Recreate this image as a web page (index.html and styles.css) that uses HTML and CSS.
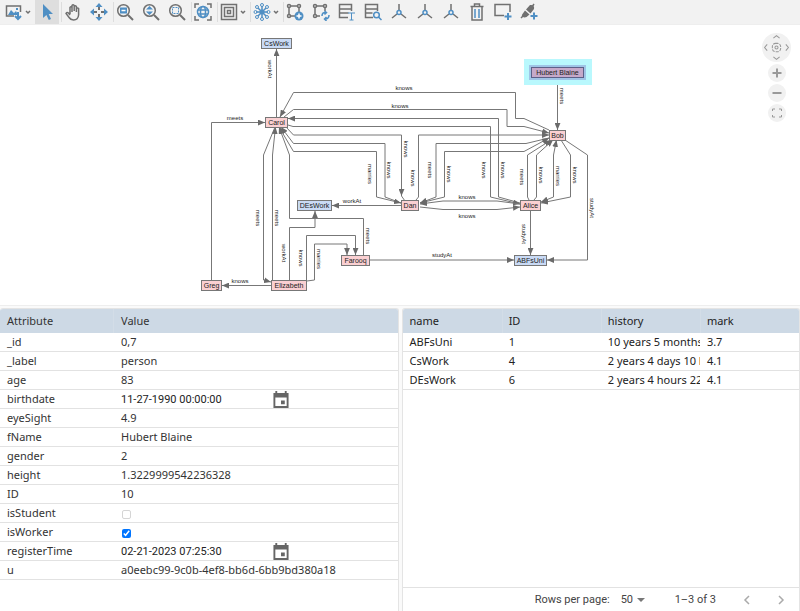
FILE: index.html
```
<!DOCTYPE html>
<html lang="en">
<head>
    <meta charset="UTF-8">
    <meta name="viewport" content="width=device-width, initial-scale=1.0">
    <title>Graph Explorer</title>
    <link rel="stylesheet" href="styles.css">
</head>
<body>

<div class="toolbar" role="toolbar" aria-label="Graph tools">
    <button class="tool wide" aria-label="Export image">
        <svg class="icon" viewBox="0 0 18 18"><path d="M9 13H1.500V3h14v6"/><path class="fill-blue" d="M3 12l3-5 3 3 2-2 2 4zM11 5h2v2h-2z"/><path class="blue thick" d="M13 9v7M10 13l3 3 3-3"/></svg>
        <svg class="chevron" viewBox="0 0 6 6"><path d="M1 2l2 2 2-2"/></svg>
    </button>
    <span class="divider"></span>
    <button class="tool active" aria-label="Select">
        <svg class="icon" viewBox="0 0 18 18"><path class="fill-blue" d="M5 1v14l3.400-3 2.400 5 2.200-1-2.300-5H15z"/></svg>
    </button>
    <span class="divider"></span>
    <button class="tool" aria-label="Pan">
        <svg class="icon" viewBox="0 0 18 18"><path d="M6 11V4.500q1-1.500 2 0V9M8 8V2.500q1-1.500 2.200 0V8M10.200 8V3.500q1-1.300 2.200 0V9M12.400 9V5.500q1.200-1.200 2.200 0V12q-.5 5-5 5-3 0-4.500-2.500L2 10.500q.8-1.800 2.500-.5L6 12"/></svg>
    </button>
    <button class="tool" aria-label="Move">
        <svg class="icon" viewBox="0 0 18 18"><path class="fill-blue" d="M9 0l3.500 4h-7zM9 18l3.500-4h-7zM0 9l4-3.500v7zM18 9l-4-3.500v7z"/><path class="thick" d="M9 4v3M9 11v3M4 9h3M11 9h3"/></svg>
    </button>
    <span class="divider"></span>
    <button class="tool" aria-label="Zoom to area">
        <svg class="icon" viewBox="0 0 18 18"><circle cx="7.500" cy="7.500" r="5.800"/><path class="thick" d="M12 12l5 5"/><path class="fill-blue" d="M4 4.500h7v6H4z"/><path class="light" d="M5.500 7.500h4"/></svg>
    </button>
    <button class="tool" aria-label="Zoom in and out">
        <svg class="icon" viewBox="0 0 18 18"><circle cx="7.500" cy="7.500" r="5.800"/><path class="thick" d="M12 12l5 5"/><path class="fill-blue" d="M7.500 3L11 6.500H4zM7.500 12L4 8.500h7z"/></svg>
    </button>
    <button class="tool" aria-label="Zoom to selection">
        <svg class="icon" viewBox="0 0 18 18"><circle cx="7.500" cy="7.500" r="5.800"/><path class="thick" d="M12 12l5 5"/><path class="blue dash" d="M4.500 4.500h6v6h-6z"/></svg>
    </button>
    <span class="divider"></span>
    <button class="tool" aria-label="Fit graph">
        <svg class="icon" viewBox="0 0 18 18"><path d="M1 5V1h4M13 1h4v4M17 13v4h-4M5 17H1v-4"/><circle class="blue" cx="9" cy="9" r="5.500"/><ellipse class="blue" cx="9" cy="9" rx="2.500" ry="5.500"/><path class="blue" d="M4 7h10M4 11h10"/></svg>
    </button>
    <span class="divider"></span>
    <button class="tool wide" aria-label="Layers">
        <svg class="icon" viewBox="0 0 18 18"><path d="M1.500 1.500h15v15h-15zM4.500 4.500h9v9h-9zM7.500 7.500h3v3h-3z"/></svg>
        <svg class="chevron" viewBox="0 0 6 6"><path d="M1 2l2 2 2-2"/></svg>
    </button>
    <span class="divider"></span>
    <button class="tool wide" aria-label="Layout">
        <svg class="icon" viewBox="0 0 18 18"><path class="blue" d="M9 3v12M3 9h12M5 5l8 8M13 5l-8 8"/><g class="dots"><circle cx="9" cy="2" r="1.500"/><circle cx="9" cy="16" r="1.500"/><circle cx="2.500" cy="9" r="1.500"/><circle cx="15.500" cy="9" r="1.500"/><circle cx="4" cy="4" r="1.500"/><circle cx="14" cy="14" r="1.500"/><circle cx="14" cy="4" r="1.500"/><circle cx="4" cy="14" r="1.500"/></g><circle class="fill-blue" cx="9" cy="9" r="2.500"/></svg>
        <svg class="chevron" viewBox="0 0 6 6"><path d="M1 2l2 2 2-2"/></svg>
    </button>
    <span class="divider"></span>
    <button class="tool" aria-label="Add to graph">
        <svg class="icon" viewBox="0 0 18 18"><path d="M4 3h8M3 4v8M13 4v5M4 13h5"/><circle cx="3" cy="3" r="1.500"/><circle cx="13" cy="3" r="1.500"/><circle cx="3" cy="13" r="1.500"/><circle class="fill-blue" cx="13" cy="13" r="4.500"/><path class="light" d="M13 10.500v5M10.500 13h5"/></svg>
    </button>
    <button class="tool" aria-label="Reload graph">
        <svg class="icon" viewBox="0 0 18 18"><path d="M4 3h8M3 4v8M13 4v4M4 13h4"/><circle cx="3" cy="3" r="1.500"/><circle cx="13" cy="3" r="1.500"/><circle cx="3" cy="13" r="1.500"/><path class="blue" d="M10 13q0-4 4-3.500M12.500 8l2 1.500-2 2M17 12q0 4-4 4M14.500 14L12.500 16l2 2"/></svg>
    </button>
    <button class="tool" aria-label="Edit labels">
        <svg class="icon" viewBox="0 0 18 18"><path d="M10 14.500H1.500v-13h12V8M1.500 6h12M1.500 10h9"/><path class="blue thin" d="M10 10h7M13.500 10v7M11.500 17h4"/></svg>
    </button>
    <button class="tool" aria-label="Search data">
        <svg class="icon" viewBox="0 0 18 18"><path d="M9 14.500H1.500v-13h12V8M1.500 6h12M1.500 10h7"/><circle class="blue" cx="12.500" cy="12" r="2.800"/><path class="blue" d="M14.500 14l3 3"/></svg>
    </button>
    <button class="tool" aria-label="Expand incoming">
        <svg class="icon" viewBox="0 0 18 18"><path d="M9 1v7M7 11l-5 4M11 11l5 4"/><circle class="blue" cx="9" cy="9.500" r="2"/></svg>
    </button>
    <button class="tool" aria-label="Expand outgoing">
        <svg class="icon" viewBox="0 0 18 18"><path d="M9 1v7M7 11l-5 4M11 11l5 4"/><circle class="blue" cx="9" cy="9.500" r="2"/></svg>
    </button>
    <button class="tool" aria-label="Expand all">
        <svg class="icon" viewBox="0 0 18 18"><path d="M9 1v7M7 11l-5 4M11 11l5 4"/><circle class="blue" cx="9" cy="9.500" r="2"/></svg>
    </button>
    <button class="tool" aria-label="Delete">
        <svg class="icon" viewBox="0 0 18 18"><path d="M2.500 3.500h13M6.500 3V1h5v2M4 4v13h10V4"/><path class="blue" d="M7 6v9M11 6v9"/></svg>
    </button>
    <button class="tool" aria-label="Add node">
        <svg class="icon" viewBox="0 0 18 18"><path d="M10 12.500H1v-11h15V9"/><path class="blue thick" d="M14 10v7M10.500 13.500h7"/></svg>
    </button>
    <button class="tool" aria-label="Add edge">
        <svg class="icon" viewBox="0 0 18 18"><path d="M1 15l3-3M12 4l2-3"/><path class="fill-gray" d="M2.500 11l2.500-3.500 4.500 4-3 2.500q-2.500 1-4-.5t0-2.500zM6 6.500L10 2q2.500-.5 3.500 1t.5 3l-3.500 4.500z"/><path class="blue thick" d="M14 9.500v7M10.500 13h7"/></svg>
    </button>
</div>

<main class="graph">
    <svg class="canvas" viewBox="0 25 800 280" role="img" aria-label="Graph of people, work places and universities">
        <defs>
            <marker id="arrow" viewBox="0 0 6 5" refX="6" refY="2.500" markerWidth="7" markerHeight="6" markerUnits="userSpaceOnUse" orient="auto">
                <path d="M0 0l6 2.500L0 5z" fill="#6a6a6a"/>
            </marker>
        </defs>

        <g class="edges">
            <path d="M276.500 117V49"/>
            <path d="M211.500 280V122.500H265"/>
            <path d="M549 130L524 118.500H515.500V92.500H293.500L280 117"/>
            <path d="M284 117L293.500 109.500H507V126.500H524L549 133"/>
            <path d="M520 203L498.500 197V118.500H288"/>
            <path d="M288 125L293 126.500H490.500V197L520 204"/>
            <path d="M286 127L293.500 135H401.500V196"/>
            <path class="plain" d="M401.500 196L405 201"/>
            <path d="M401 203L385 197V143.500H293.500L281 127"/>
            <path d="M293.500 151.500H376.500V197L401 203"/>
            <path d="M293.500 151.500L279 127"/>
            <path d="M416 200L418.500 197V135H549"/>
            <path d="M549 138L526 143.500H436V197L420 203"/>
            <path d="M524 151.500H444.500V197L420 203"/>
            <path d="M524 151.500L549 138"/>
            <path d="M529 200L527.500 197V155L551 140"/>
            <path d="M534 200L536.500 197V155L553 140"/>
            <path d="M553.500 155V197L541 202"/>
            <path d="M553.500 155L556.500 140"/>
            <path d="M561 140L570.500 155V197L541 203"/>
            <path d="M565 140L587.500 155V260H547"/>
            <path d="M557.500 78V130"/>
            <path d="M530.500 211V255"/>
            <path d="M370 260H514"/>
            <path d="M401 205.500H332"/>
            <path d="M520 204L497 201H443L420 204"/>
            <path d="M420 207L443 209.500H497L520 207"/>
            <path d="M275 127L263.500 155V280L271 282"/>
            <path d="M272.500 280V155L275.500 127"/>
            <path d="M363.500 255V218.500H289.500V155L279 127"/>
            <path d="M289.500 280V227.500H315V211"/>
            <path d="M306.500 280V235.500H355.500V255"/>
            <path d="M307 281L314.500 280V244H347V255"/>
            <path d="M271 285.500H222"/>
        </g>

        <g class="edge-labels">
            <text x="235" y="120">meets</text>
            <text x="404" y="90">knows</text>
            <text x="400" y="108">knows</text>
            <text x="352" y="203">workAt</text>
            <text x="467" y="199">knows</text>
            <text x="467" y="218">knows</text>
            <text x="442" y="257">studyAt</text>
            <text x="240" y="283">knows</text>
            <text transform="translate(268 69) rotate(90)">workAt</text>
            <text transform="translate(560 96) rotate(90)">meets</text>
            <text transform="translate(368 174) rotate(90)">marries</text>
            <text transform="translate(387 170) rotate(90)">knows</text>
            <text transform="translate(404 149) rotate(90)">knows</text>
            <text transform="translate(411 178) rotate(90)">knows</text>
            <text transform="translate(428 170) rotate(90)">meets</text>
            <text transform="translate(447 174) rotate(90)">knows</text>
            <text transform="translate(482 170) rotate(90)">knows</text>
            <text transform="translate(501 170) rotate(90)">knows</text>
            <text transform="translate(520 177) rotate(90)">meets</text>
            <text transform="translate(539 175) rotate(90)">knows</text>
            <text transform="translate(556 176) rotate(90)">marries</text>
            <text transform="translate(573 175) rotate(90)">knows</text>
            <text transform="translate(590 208) rotate(90)">studyAt</text>
            <text transform="translate(522 234) rotate(90)">studyAt</text>
            <text transform="translate(256 218) rotate(90)">meets</text>
            <text transform="translate(275 218) rotate(90)">meets</text>
            <text transform="translate(282 253) rotate(90)">workAt</text>
            <text transform="translate(299 258) rotate(90)">knows</text>
            <text transform="translate(317 259) rotate(90)">marries</text>
            <text transform="translate(366 236) rotate(90)">meets</text>
        </g>

        <g class="nodes">
            <rect class="place" x="261.500" y="38.500" width="30" height="10"/><text x="276.500" y="46">CsWork</text>
            <rect class="place" x="297.500" y="200.500" width="34" height="10"/><text x="314.500" y="208">DEsWork</text>
            <rect class="place" x="514.500" y="255.500" width="32" height="10"/><text x="530.500" y="263">ABFsUni</text>
            <rect class="person" x="265.500" y="117.500" width="22" height="10"/><text x="276.500" y="125">Carol</text>
            <rect class="person" x="549.500" y="130.500" width="16" height="10"/><text x="557.500" y="138">Bob</text>
            <rect class="person" x="401.500" y="200.500" width="17" height="10"/><text x="410" y="208">Dan</text>
            <rect class="person" x="520.500" y="200.500" width="20" height="10"/><text x="530.500" y="208">Alice</text>
            <rect class="person" x="341.500" y="255.500" width="28" height="10"/><text x="355.500" y="263">Farooq</text>
            <rect class="person" x="271.500" y="280.500" width="35" height="10"/><text x="289" y="288">Elizabeth</text>
            <rect class="person" x="201.500" y="280.500" width="20" height="10"/><text x="211.500" y="288">Greg</text>
            <rect class="halo" x="524" y="59" width="68" height="26"/>
            <rect class="halo-inner" x="529" y="65" width="57" height="15"/>
            <rect class="selected" x="531.500" y="67.500" width="52" height="10"/><text x="557.500" y="75">Hubert Blaine</text>
        </g>
    </svg>

    <div class="nav">
        <button class="nav-button wheel" aria-label="Pan view">
            <svg viewBox="0 0 28 28"><path d="M11 5l3-2.500L17 5M11 23l3 2.500 3-2.500M5 11l-2.500 3L5 17M23 11l2.500 3-2.500 3"/><rect x="10" y="10" width="8" height="8" rx="3" stroke-dasharray="3 1"/><circle cx="14" cy="14" r="1.500"/></svg>
        </button>
        <button class="nav-button" aria-label="Zoom in"><svg viewBox="0 0 18 18"><path class="bold" d="M9 4.500v9M4.500 9h9"/></svg></button>
        <button class="nav-button" aria-label="Zoom out"><svg viewBox="0 0 18 18"><path class="bold" d="M4.500 9h9"/></svg></button>
        <button class="nav-button" aria-label="Fit to window"><svg viewBox="0 0 18 18"><path d="M4.500 7V5H7M11 5h2.500v2M13.500 11v2H11M7 13H4.500v-2"/></svg></button>
    </div>
</main>

<div class="panels">
    <section class="panel">
        <table class="grid attributes">
            <colgroup><col class="col-attribute"><col></colgroup>
            <thead>
                <tr><th>Attribute</th><th>Value</th></tr>
            </thead>
            <tbody>
                <tr><td>_id</td><td>0,7</td></tr>
                <tr><td>_label</td><td>person</td></tr>
                <tr><td>age</td><td>83</td></tr>
                <tr>
                    <td><label for="birthdate">birthdate</label></td>
                    <td>
                        <div class="date-field">
                            <input type="text" id="birthdate" value="11-27-1990 00:00:00">
                            <button aria-label="Pick birthdate"><svg viewBox="0 0 18 18"><path d="M3 0h2v2h8V0h2v2h2v16H1V2h2zM3 7v9h12V7zM9 10h4v4H9z" fill-rule="evenodd"/></svg></button>
                        </div>
                    </td>
                </tr>
                <tr><td>eyeSight</td><td>4.9</td></tr>
                <tr><td>fName</td><td>Hubert Blaine</td></tr>
                <tr><td>gender</td><td>2</td></tr>
                <tr><td>height</td><td>1.3229999542236328</td></tr>
                <tr><td>ID</td><td>10</td></tr>
                <tr><td><label for="isStudent">isStudent</label></td><td><input type="checkbox" id="isStudent"></td></tr>
                <tr><td><label for="isWorker">isWorker</label></td><td><input type="checkbox" id="isWorker" checked></td></tr>
                <tr>
                    <td><label for="registerTime">registerTime</label></td>
                    <td>
                        <div class="date-field">
                            <input type="text" id="registerTime" value="02-21-2023 07:25:30">
                            <button aria-label="Pick register time"><svg viewBox="0 0 18 18"><path d="M3 0h2v2h8V0h2v2h2v16H1V2h2zM3 7v9h12V7zM9 10h4v4H9z" fill-rule="evenodd"/></svg></button>
                        </div>
                    </td>
                </tr>
                <tr><td>u</td><td>a0eebc99-9c0b-4ef8-bb6d-6bb9bd380a18</td></tr>
            </tbody>
        </table>
    </section>

    <section class="panel">
        <table class="grid records">
            <thead>
                <tr><th>name</th><th>ID</th><th>history</th><th>mark</th></tr>
            </thead>
            <tbody>
                <tr><td>ABFsUni</td><td>1</td><td>10 years 5 months</td><td>3.7</td></tr>
                <tr><td>CsWork</td><td>4</td><td>2 years 4 days 10 h</td><td>4.1</td></tr>
                <tr><td>DEsWork</td><td>6</td><td>2 years 4 hours 22</td><td>4.1</td></tr>
            </tbody>
        </table>
        <div class="pager">
            <label for="pageSize">Rows per page:</label>
            <span class="page-size">
                <select id="pageSize"><option>50</option><option>100</option></select>
            </span>
            <span class="range">1–3 of 3</span>
            <button aria-label="Previous page"><svg viewBox="0 0 10 10"><path d="M7 1L3 5l4 4"/></svg></button>
            <button aria-label="Next page"><svg viewBox="0 0 10 10"><path d="M3 1l4 4-4 4"/></svg></button>
        </div>
    </section>
</div>

</body>
</html>
```
FILE: styles.css
```
* {
    box-sizing: border-box;
}
body {
    margin: 0;
    min-height: 100vh;
    display: flex;
    flex-direction: column;
    background-color: #fff;
    color: #333;
    font-family: "Noto Sans", sans-serif;
    font-size: 11px;
}
button {
    padding: 0;
    border: none;
    background: none;
    cursor: pointer;
}
svg {
    display: block;
}

/* Toolbar */
.toolbar {
    display: flex;
    align-items: center;
    height: 25px;
    padding-left: 2px;
    background-color: #f2f2f2;
    border-bottom: 1px solid #eee;
}
.tool {
    display: flex;
    align-items: center;
    justify-content: center;
    width: 24px;
    height: 24px;
    margin-right: 2px;
}
.tool.wide {
    width: 31px;
}
.tool.active {
    background-color: #dedede;
}
.divider {
    width: 1px;
    height: 20px;
    margin-right: -1px;
    background-color: #ddd;
}
.icon {
    width: 18px;
    height: 18px;
}
.icon, .chevron {
    fill: none;
    stroke: #707070;
    stroke-width: 1.5;
}
.chevron {
    width: 6px;
    height: 6px;
    margin-left: 2px;
}
.icon .blue, .icon .dots {
    stroke: #4f8fc4;
}
.icon .dots {
    stroke-width: 1;
}
.icon .fill-blue {
    fill: #4f8fc4;
    stroke: none;
}
.icon .fill-gray {
    fill: #707070;
    stroke: none;
}
.icon .light {
    stroke: #fff;
}
.icon .thick {
    stroke-width: 2;
}
.icon .thin {
    stroke-width: 1;
}
.icon .dash {
    stroke-width: 1;
    stroke-dasharray: 2 1;
}

/* Graph */
.graph {
    position: relative;
}
.canvas {
    width: 100%;
    height: auto;
    font-family: "Liberation Sans", Arial, sans-serif;
    text-anchor: middle;
}
.edges path {
    fill: none;
    stroke: #777;
    marker-end: url(#arrow);
}
.edges .plain {
    marker-end: none;
}
.edge-labels {
    font-size: 6px;
    fill: #222;
}
.nodes {
    font-size: 7px;
    fill: #222;
}
.nodes rect {
    stroke: #777;
}
.nodes .place {
    fill: #c9daf5;
}
.nodes .person {
    fill: #fad0d2;
}
.nodes .halo {
    fill: #b9f8fd;
    stroke: none;
}
.nodes .halo-inner {
    fill: #9fc4e6;
    stroke: none;
}
.nodes .selected {
    fill: #c5a9c9;
    stroke: #5d6088;
}
.nav {
    position: absolute;
    top: 8px;
    right: 9px;
    display: flex;
    flex-direction: column;
    align-items: center;
    gap: 2px;
}
.nav-button {
    width: 18px;
    height: 18px;
    border-radius: 50%;
    background-color: #f1f1f1;
}
.nav-button.wheel {
    width: 29px;
    height: 29px;
}
.nav-button svg {
    width: 100%;
    height: 100%;
    fill: none;
    stroke: #999;
}
.nav-button .bold {
    stroke-width: 2;
}

/* Tables */
.panels {
    flex: 1;
    display: grid;
    grid-template-columns: 1fr 1fr;
    gap: 3px;
    padding-top: 2px;
    border-top: 1px solid #eee;
    background-color: #fafafa;
}
.panel {
    display: flex;
    flex-direction: column;
    min-width: 0;
    border: 1px solid #e4e4e4;
    border-left: none;
    border-bottom: none;
    border-radius: 3px 3px 0 0;
    background-color: #fff;
    overflow: hidden;
}
.panel + .panel {
    border-left: 1px solid #e4e4e4;
}
.grid {
    width: 100%;
    table-layout: fixed;
    border-collapse: separate;
    border-spacing: 0;
}
.grid th {
    height: 24px;
    padding: 0 0 2px 7px;
    background-color: #cdd9e5;
    font-weight: 400;
    text-align: left;
}
.grid th + th {
    border-left: 1px solid #d3dde7;
}
.grid td {
    height: 19px;
    padding: 0 0 0 7px;
    border-bottom: 1px solid #e2e2e2;
    line-height: 18px;
    white-space: nowrap;
    overflow: hidden;
}
.attributes td + td {
    padding-left: 8px;
}
.col-attribute {
    width: 113px;
}
.records {
    color: #222;
}
.records th + th {
    padding-left: 6px;
}
.grid input[type="checkbox"] {
    display: block;
    width: 9px;
    height: 9px;
    margin: 2px 1px 0;
}
.grid input[type="checkbox"]:not(:checked) {
    appearance: none;
    border: 1px solid #d5d5d5;
    border-radius: 2px;
}
.date-field {
    display: flex;
    align-items: center;
    height: 18px;
}
.date-field input {
    width: 151px;
    padding: 0;
    border: none;
    background: none;
    color: #222;
    font-family: Roboto, sans-serif;
    font-size: 11px;
}
.date-field svg {
    width: 18px;
    height: 17px;
    fill: #666;
}
.pager {
    display: flex;
    align-items: center;
    justify-content: flex-end;
    height: 24px;
    margin-top: auto;
    padding-right: 13px;
    border-top: 1px solid #e2e2e2;
    color: #444;
    font-family: Roboto, sans-serif;
    font-size: 11px;
}
.page-size {
    display: flex;
    align-items: center;
    margin: 0 30px 0 11px;
}
.page-size::after {
    content: '';
    margin-left: -8px;
    border: 4px solid transparent;
    border-top-color: #777;
    border-bottom: 0;
    pointer-events: none;
}
.page-size select {
    width: 24px;
    padding: 0;
    border: none;
    background: none;
    color: inherit;
    font: inherit;
    appearance: none;
}
.pager button {
    margin-left: 24px;
}
.pager .range + button {
    margin-left: 26px;
}
.pager button svg {
    width: 10px;
    height: 10px;
    fill: none;
    stroke: #aaa;
    stroke-width: 1.5;
}
```
